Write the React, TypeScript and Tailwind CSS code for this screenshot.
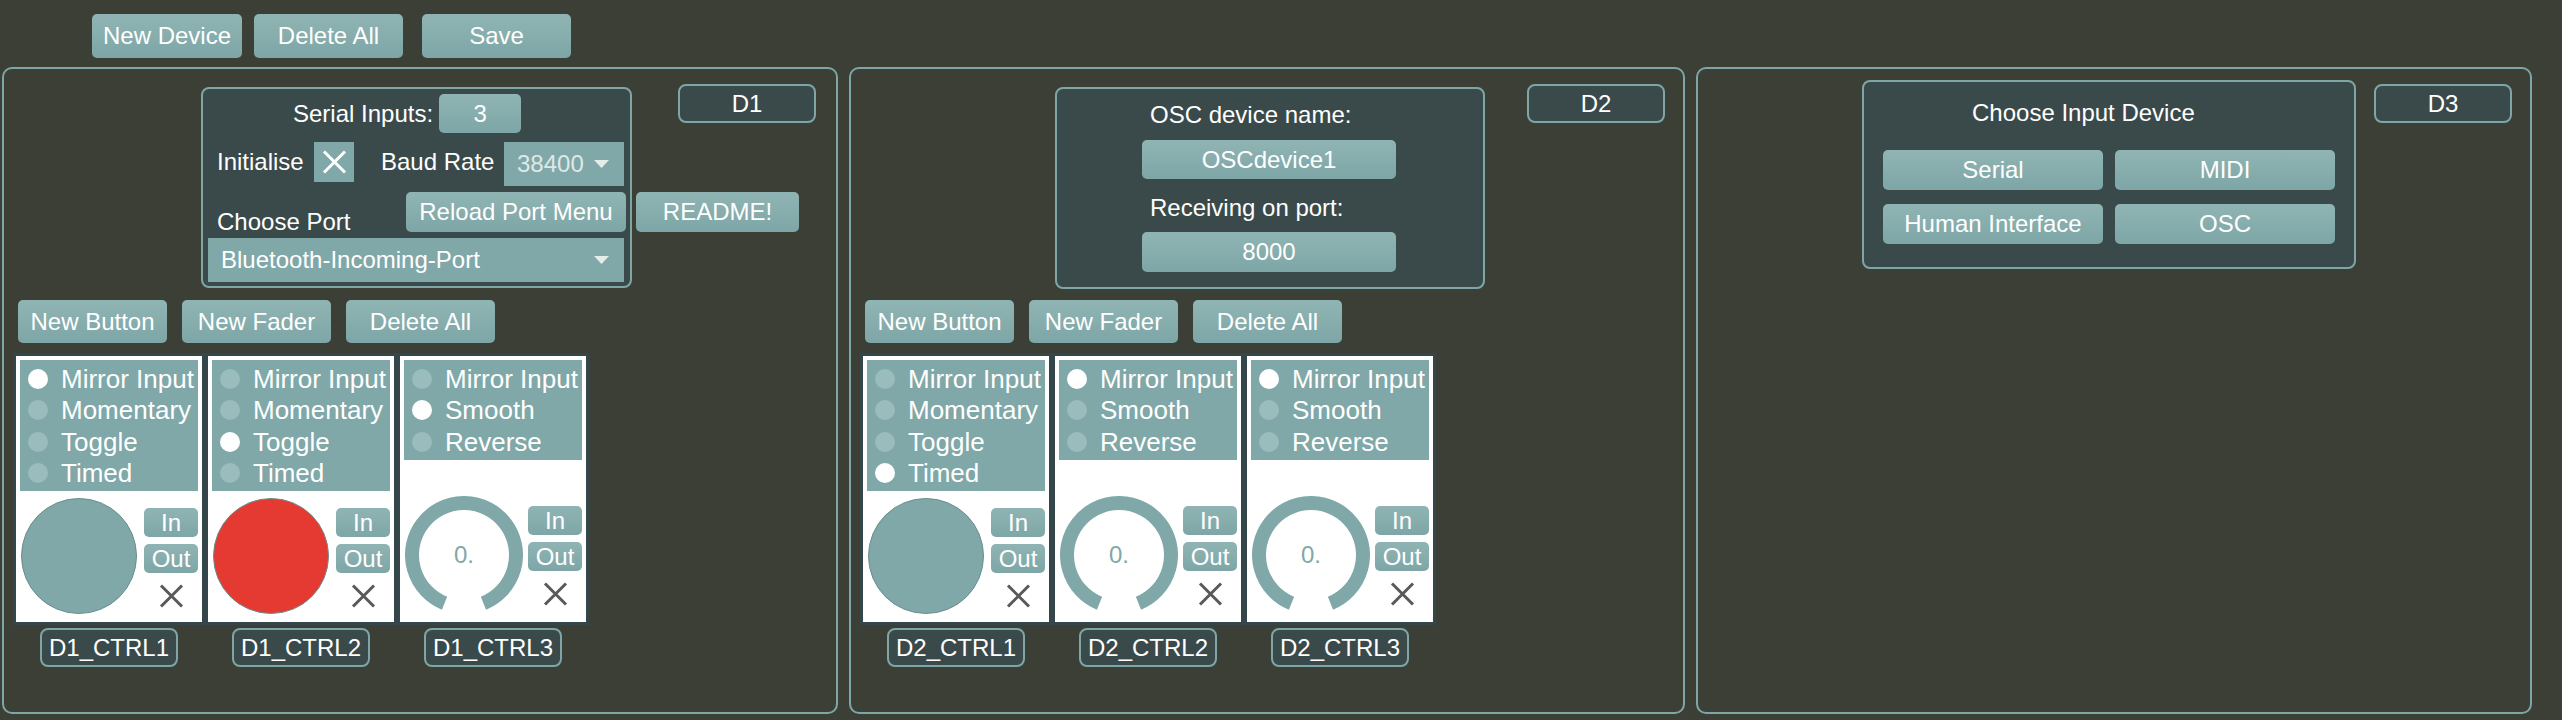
const teal = "border-[#7fa6a6]";
const btnBase =
  "flex items-center justify-center rounded-[5px] bg-linear-to-b from-[#90b4b4] to-[#7ea6a6] text-white text-[24px] leading-none";

function Btn({ label, className }: { label: string; className: string }) {
  return <div className={`${btnBase} ${className}`}>{label}</div>;
}

function Caret() {
  return (
    <svg width="15" height="8" viewBox="0 0 15 8">
      <path d="M0 0h15L7.5 8z" fill="#e4ecec" />
    </svg>
  );
}

function XMark({ color, className }: { color: string; className?: string }) {
  return (
    <svg width="25" height="24" viewBox="0 0 25 24" className={className}>
      <path d="M2 1.5L23 22.5M23 1.5L2 22.5" stroke={color} strokeWidth="3" />
    </svg>
  );
}

function Tag({ label, className }: { label: string; className: string }) {
  return (
    <div
      className={`flex h-[39px] w-[138px] items-center justify-center rounded-[8px] border-2 ${teal} bg-[#3a4a4b] text-[24px] leading-none text-white ${className}`}
    >
      {label}
    </div>
  );
}

function Knob() {
  return (
    <div className="relative ml-[1px] flex size-[118px] items-center justify-center">
      <svg width="118" height="118" viewBox="0 0 118 118" className="absolute inset-0">
        <path d="M39.52 107.21A52 52 0 1 1 78.48 107.21" fill="none" stroke="#80a8a8" strokeWidth="14" />
      </svg>
      <span className="relative text-[24px] leading-none text-[#80a8a8]">0.</span>
    </div>
  );
}

const buttonModes = ["Mirror Input", "Momentary", "Toggle", "Timed"];
const faderModes = ["Mirror Input", "Smooth", "Reverse"];

function Card({ kind, on, name, red }: { kind: "button" | "fader"; on: number; name: string; red?: boolean }) {
  const items = kind === "button" ? buttonModes : faderModes;
  return (
    <div className="flex flex-col items-center">
      <div className="flex h-[272px] w-[192px] flex-col border-[3px] border-[#34464a] bg-white p-[4px]">
        <div className="bg-[#80a8a8] pb-[2px] pt-[3px]">
          {items.map((t, i) => (
            <div key={t} className="flex h-[31.5px] items-center">
              <span className={`ml-[8px] size-[20px] shrink-0 rounded-full ${i === on ? "bg-white" : "bg-[#9bbcbc]"}`} />
              <span className="ml-[13px] whitespace-nowrap text-[26px] leading-none text-white">{t}</span>
            </div>
          ))}
        </div>
        <div className="mb-[4px] mt-auto flex">
          {kind === "button" ? (
            <div
              className={`ml-[1px] size-[116px] rounded-full border-[1.5px] border-[#6c8e8e] ${red ? "bg-[#e53a32]" : "bg-[#80a8a8]"}`}
            />
          ) : (
            <Knob />
          )}
          <div className="ml-auto flex w-[54px] flex-col items-center pt-[10px]">
            <Btn label="In" className="h-[29px] w-[54px] text-[23px]" />
            <Btn label="Out" className="mt-[7px] h-[29px] w-[54px] text-[23px]" />
            <XMark color="#58595b" className="mt-[11px]" />
          </div>
        </div>
      </div>
      <Tag label={name} className="mt-[3px] w-[137px]" />
    </div>
  );
}

function Controls({ dev, cards }: { dev: string; cards: { kind: "button" | "fader"; on: number; red?: boolean }[] }) {
  return (
    <>
      <div className="ml-[14px] flex gap-[15px]">
        <Btn label="New Button" className="h-[43px] w-[149px]" />
        <Btn label="New Fader" className="h-[43px] w-[149px]" />
        <Btn label="Delete All" className="h-[43px] w-[149px]" />
      </div>
      <div className="ml-[9px] mt-[10px] flex">
        {cards.map((c, i) => (
          <Card key={i} kind={c.kind} on={c.on} red={c.red} name={`${dev}_CTRL${i + 1}`} />
        ))}
      </div>
    </>
  );
}

const box = `rounded-[8px] border-2 ${teal} bg-[#3a4a4b] text-[24px] leading-none text-white`;
const panel = `h-[647px] w-[836px] shrink-0 rounded-[10px] border-2 ${teal}`;

function SerialPanel() {
  return (
    <div className={panel}>
      <div className="flex items-start">
        <div className={`ml-[197px] mt-[18px] flex h-[201px] w-[431px] flex-col ${box}`}>
          <div className="ml-[90px] mt-[5px] flex items-center">
            <span>Serial Inputs:</span>
            <Btn label="3" className="ml-[6px] h-[39px] w-[82px]" />
          </div>
          <div className="mt-[9px] flex items-start">
            <span className="ml-[14px] flex h-[40px] w-[97px] items-center">Initialise</span>
            <div className="flex size-[40px] items-center justify-center bg-[#80a8a8]">
              <XMark color="#ffffff" />
            </div>
            <span className="ml-[27px] flex h-[40px] w-[123px] items-center">Baud Rate</span>
            <div className="flex h-[44px] w-[120px] items-center justify-between bg-[#80a8a8] pl-[13px] pr-[15px] text-[#dfe8e8]">
              <span>38400</span>
              <Caret />
            </div>
          </div>
          <div className="mt-[6px] flex items-start">
            <span className="ml-[14px] h-[40px] w-[189px] pt-[18px]">Choose Port</span>
            <Btn label="Reload Port Menu" className="h-[40px] w-[220px]" />
          </div>
          <div className="ml-[5px] mt-[6px] flex h-[44px] w-[416px] items-center justify-between bg-[#80a8a8] pl-[13px] pr-[15px]">
            <span>Bluetooth-Incoming-Port</span>
            <Caret />
          </div>
        </div>
        <div className="ml-[4px] flex flex-col items-start">
          <Tag label="D1" className="ml-[42px] mt-[15px]" />
          <Btn label="README!" className="mt-[69px] h-[40px] w-[163px]" />
        </div>
      </div>
      <div className="mt-[12px]">
        <Controls
          dev="D1"
          cards={[
            { kind: "button", on: 0 },
            { kind: "button", on: 2, red: true },
            { kind: "fader", on: 1 },
          ]}
        />
      </div>
    </div>
  );
}

function OscPanel() {
  return (
    <div className={panel}>
      <div className="flex items-start">
        <div className={`ml-[204px] mt-[18px] flex h-[202px] w-[430px] flex-col ${box}`}>
          <div className="ml-[85px] flex flex-col items-start">
            <span className="ml-[8px] mt-[12px] h-[28px] leading-[28px]">OSC device name:</span>
            <Btn label="OSCdevice1" className="mt-[11px] h-[39px] w-[254px]" />
            <span className="ml-[8px] mt-[15px] h-[28px] leading-[28px]">Receiving on port:</span>
            <Btn label="8000" className="mt-[10px] h-[40px] w-[254px]" />
          </div>
        </div>
        <Tag label="D2" className="ml-[42px] mt-[15px]" />
      </div>
      <div className="mt-[11px]">
        <Controls
          dev="D2"
          cards={[
            { kind: "button", on: 3 },
            { kind: "fader", on: 0 },
            { kind: "fader", on: 0 },
          ]}
        />
      </div>
    </div>
  );
}

function ChoosePanel() {
  return (
    <div className={panel}>
      <div className="flex items-start">
        <div className={`ml-[164px] mt-[11px] flex h-[189px] w-[494px] flex-col ${box}`}>
          <span className="ml-[108px] mt-[17px] h-[28px] leading-[28px]">Choose Input Device</span>
          <div className="ml-[19px] mt-[23px] grid grid-cols-[220px_220px] gap-x-[12px] gap-y-[14px]">
            <Btn label="Serial" className="h-[40px]" />
            <Btn label="MIDI" className="h-[40px]" />
            <Btn label="Human Interface" className="h-[40px]" />
            <Btn label="OSC" className="h-[40px]" />
          </div>
        </div>
        <Tag label="D3" className="ml-[18px] mt-[15px]" />
      </div>
    </div>
  );
}

export default function App() {
  return (
    <div className="h-[720px] w-[2562px] overflow-hidden bg-[#3c3f36] font-['Liberation_Sans',Arial,sans-serif]">
      <div className="flex pl-[92px] pt-[14px]">
        <Btn label="New Device" className="h-[44px] w-[150px]" />
        <Btn label="Delete All" className="ml-[12px] h-[44px] w-[149px]" />
        <Btn label="Save" className="ml-[19px] h-[44px] w-[149px]" />
      </div>
      <div className="mt-[9px] flex gap-[11px] pl-[2px]">
        <SerialPanel />
        <OscPanel />
        <ChoosePanel />
      </div>
    </div>
  );
}
